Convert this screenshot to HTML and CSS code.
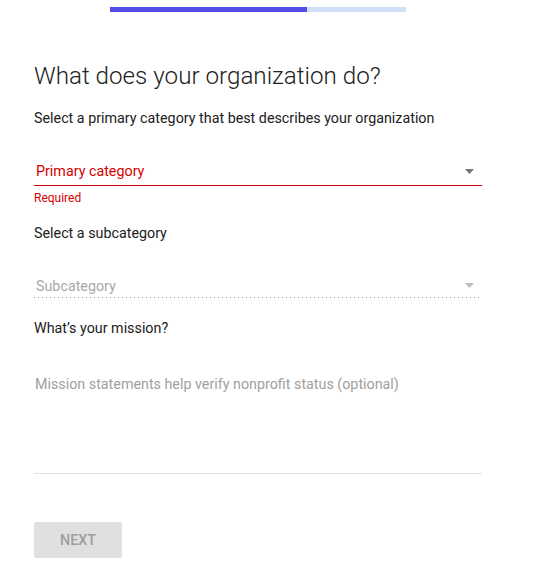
FILE: index.html
```html
<!DOCTYPE html>
<html lang="en">
<head>
<meta charset="utf-8">
<title>What does your organization do?</title>
<link rel="stylesheet" href="styles.css">
</head>
<body>
  <div class="progress"><div class="progress-fill"></div></div>
  <main class="form">
    <h1 class="title">What does your organization do?</h1>
    <p class="label label-first">Select a primary category that best describes your organization</p>
    <div class="select select-error">
      <span class="select-value">Primary category</span>
      <svg class="arrow" width="9" height="5" viewBox="0 0 9 5"><polygon points="0,0 9,0 4.5,5"/></svg>
    </div>
    <div class="error-text">Required</div>
    <p class="label label-sub">Select a subcategory</p>
    <div class="select select-disabled">
      <span class="select-value">Subcategory</span>
      <svg class="arrow" width="9" height="5" viewBox="0 0 9 5"><polygon points="0,0 9,0 4.5,5"/></svg>
    </div>
    <p class="label label-mission">What’s your mission?</p>
    <textarea class="mission" placeholder="Mission statements help verify nonprofit status (optional)"></textarea>
    <button class="next" type="button" disabled>NEXT</button>
  </main>
</body>
</html>
```

FILE: styles.css
```css
html, body {
  margin: 0;
  padding: 0;
  background: #ffffff;
}
body {
  font-family: Roboto, "Noto Sans", "Liberation Sans", sans-serif;
  color: #212121;
  font-size: 14.3px;
  line-height: 20px;
}
.progress {
  margin: 7px 0 0 110px;
  width: 296px;
  height: 5px;
  background: #d2dff9;
}
.progress-fill {
  width: 197px;
  height: 5px;
  background: #504ce4;
}
.form {
  margin-left: 34px;
  width: 448px;
  display: flex;
  flex-direction: column;
}
.title {
  margin: 48px 0 0;
  font-size: 24.2px;
  line-height: 32px;
  font-weight: 300;
  color: #212121;
}
.label {
  margin: 0;
  font-size: 14.3px;
  line-height: 20px;
  color: #212121;
}
.label-first { margin-top: 16px; }
.select {
  display: flex;
  align-items: center;
  justify-content: space-between;
  height: 20px;
}
.select-error {
  margin-top: 33px;
  padding-bottom: 4px;
  border-bottom: 1px solid #d50000;
  color: #d50000;
}
.select-error .select-value { padding-left: 2px; }
.select-error .arrow { fill: #757575; }
.select-disabled {
  margin-top: 32px;
  padding-bottom: 2px;
  color: #a8a8a8;
  background-image: linear-gradient(to right, rgba(0,0,0,0.42) 0, rgba(0,0,0,0.42) 1px, transparent 1px);
  background-size: 4px 1px;
  background-repeat: repeat-x;
  background-position: 0 100%;
  height: 21px;
}
.select-disabled .select-value { padding-left: 2px; }
.select-disabled .arrow { fill: #bdbdbd; }
.arrow {
  margin-right: 8px;
  display: block;
}
.error-text {
  margin-top: 4px;
  font-size: 12px;
  line-height: 16px;
  color: #d50000;
}
.label-sub { margin-top: 17px; }
.label-mission { margin-top: 20px; }
.mission {
  display: block;
  margin: 36px 0 0;
  padding: 0 0 0 1px;
  width: 447px;
  height: 99px;
  border: none;
  border-bottom: 1px solid #e0e0e0;
  resize: none;
  outline: none;
  font-family: inherit;
  font-size: 14.3px;
  line-height: 20px;
  color: #212121;
  background: transparent;
}
.mission::placeholder {
  color: #a0a0a0;
  opacity: 1;
}
.next {
  margin-top: 48px;
  width: 88px;
  height: 36px;
  border: none;
  border-radius: 2px;
  background: #e0e0e0;
  color: #9e9e9e;
  font-family: inherit;
  font-size: 14.3px;
  font-weight: 500;
  padding: 0;
  align-self: flex-start;
}
```
